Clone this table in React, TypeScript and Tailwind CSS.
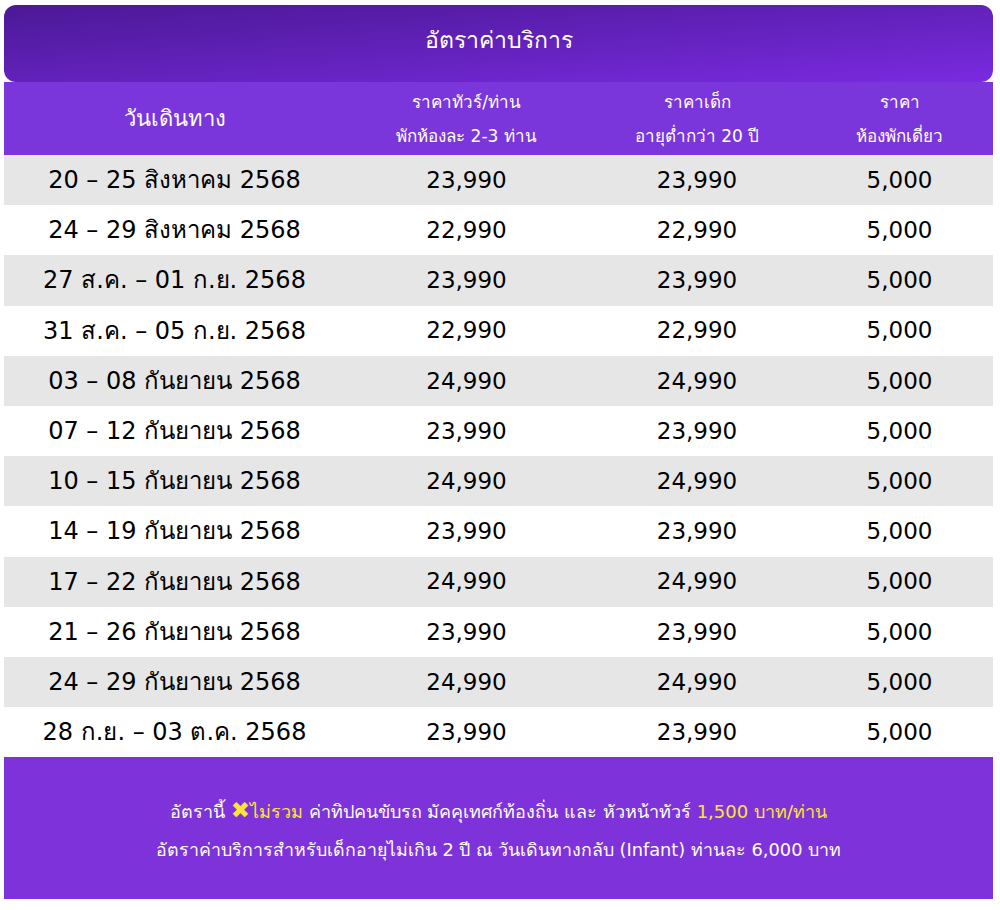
import React from "react";

const rows = [
  ["20 – 25 สิงหาคม 2568", "23,990", "23,990", "5,000"],
  ["24 – 29 สิงหาคม 2568", "22,990", "22,990", "5,000"],
  ["27 ส.ค. – 01 ก.ย. 2568", "23,990", "23,990", "5,000"],
  ["31 ส.ค. – 05 ก.ย. 2568", "22,990", "22,990", "5,000"],
  ["03 – 08 กันยายน 2568", "24,990", "24,990", "5,000"],
  ["07 – 12 กันยายน 2568", "23,990", "23,990", "5,000"],
  ["10 – 15 กันยายน 2568", "24,990", "24,990", "5,000"],
  ["14 – 19 กันยายน 2568", "23,990", "23,990", "5,000"],
  ["17 – 22 กันยายน 2568", "24,990", "24,990", "5,000"],
  ["21 – 26 กันยายน 2568", "23,990", "23,990", "5,000"],
  ["24 – 29 กันยายน 2568", "24,990", "24,990", "5,000"],
  ["28 ก.ย. – 03 ต.ค. 2568", "23,990", "23,990", "5,000"],
];

const cols = "grid grid-cols-[341px_243px_218px_187px]";

export default function App() {
  return (
    <main className="w-[1000px] h-[910px] bg-white pt-[5px] pl-[4px] font-['Tahoma','DejaVu_Sans',sans-serif]">
      <div className="w-[989px]">
        <div className="h-[77px] rounded-xl bg-gradient-to-br from-[#4b1996] to-[#7a2ae0] flex justify-center pt-[17px] text-white text-[23px] leading-[36px]">
          อัตราค่าบริการ
        </div>
        <div className={`${cols} h-[73px] bg-[#7b36db] text-white text-[17px] leading-[34px] text-center items-center`}>
          <div className="text-[22px]">วันเดินทาง</div>
          <div>
            <div>ราคาทัวร์/ท่าน</div>
            <div>พักห้องละ 2-3 ท่าน</div>
          </div>
          <div>
            <div>ราคาเด็ก</div>
            <div>อายุต่ำกว่า 20 ปี</div>
          </div>
          <div>
            <div>ราคา</div>
            <div>ห้องพักเดี่ยว</div>
          </div>
        </div>
        {rows.map((r, i) => (
          <div
            key={i}
            className={`${cols} h-[50.2px] items-center text-center text-[23px] text-black ${
              i % 2 === 0 ? "bg-[#e6e6e6]" : "bg-white"
            }`}
          >
            <div className="text-[24px]">{r[0]}</div>
            <div>{r[1]}</div>
            <div>{r[2]}</div>
            <div>{r[3]}</div>
          </div>
        ))}
        <div className="h-[142px] bg-[#7e33da] flex flex-col items-center justify-center text-white text-[18px] leading-[38px] pt-[6px]">
          <div>
            อัตรานี้ <span className="text-[#ffe33a] text-[23px] leading-[20px]">✖</span>
            <span className="text-[#ffe33a]">ไม่รวม</span> ค่าทิปคนขับรถ มัคคุเทศก์ท้องถิ่น และ หัวหน้าทัวร์{" "}
            <span className="text-[#ffe33a]">1,500 บาท/ท่าน</span>
          </div>
          <div className="text-[17.8px]">
            อัตราค่าบริการสำหรับเด็กอายุไม่เกิน 2 ปี ณ วันเดินทางกลับ (Infant) ท่านละ 6,000 บาท
          </div>
        </div>
      </div>
    </main>
  );
}
